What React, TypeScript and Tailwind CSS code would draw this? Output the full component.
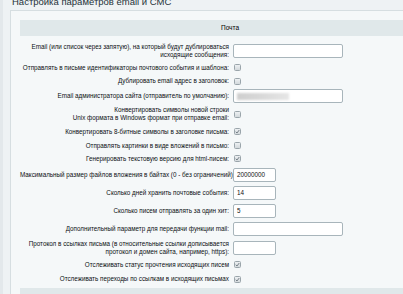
import React from "react";

type Row =
  | { kind: "input"; label: string[]; h: number; w: "wide" | "small"; value?: string; blurred?: boolean }
  | { kind: "check"; label: string[]; h: number; checked: boolean };

const rows: Row[] = [
  { kind: "input", label: ["Email (или список через запятую), на который будут дублироваться", "исходящие сообщения:"], h: 20, w: "wide" },
  { kind: "check", label: ["Отправлять в письме идентификаторы почтового события и шаблона:"], h: 13, checked: false },
  { kind: "check", label: ["Дублировать email адрес в заголовок:"], h: 14, checked: false },
  { kind: "input", label: ["Email администратора сайта (отправитель по умолчанию):"], h: 16, w: "wide", blurred: true },
  { kind: "check", label: ["Конвертировать символы новой строки", "Unix формата в Windows формат при отправке email:"], h: 20, checked: false },
  { kind: "check", label: ["Конвертировать 8-битные символы в заголовке письма:"], h: 15, checked: true },
  { kind: "check", label: ["Отправлять картинки в виде вложений в письмо:"], h: 13, checked: false },
  { kind: "check", label: ["Генерировать текстовую версию для html-писем:"], h: 13, checked: true },
  { kind: "input", label: ["Максимальный размер файлов вложения в байтах (0 - без ограничений):"], h: 19, w: "small", value: "20000000" },
  { kind: "input", label: ["Сколько дней хранить почтовые события:"], h: 18, w: "small", value: "14" },
  { kind: "input", label: ["Сколько писем отправлять за один хит:"], h: 17, w: "small", value: "5" },
  { kind: "input", label: ["Дополнительный параметр для передачи функции mail:"], h: 20, w: "wide" },
  { kind: "input", label: ["Протокол в ссылках письма (в относительные ссылки дописывается", "протокол и домен сайта, например, https):"], h: 18, w: "small" },
  { kind: "check", label: ["Отслеживать статус прочтения исходящих писем"], h: 15, checked: true },
  { kind: "check", label: ["Отслеживать переходы по ссылкам в исходящих письмах"], h: 14, checked: true },
];

function Checkbox({ checked }: { checked: boolean }) {
  return (
    <div className="ml-[1px] flex h-[7px] w-[7px] items-center justify-center rounded-[1.5px] border border-[#9aa5ab] bg-gradient-to-b from-[#edf0f2] to-[#d3d9dc]">
      {checked && (
        <svg width="5" height="5" viewBox="0 0 10 10">
          <path d="M1.5 5.5 L4 8 L8.5 2" fill="none" stroke="#56616b" strokeWidth="1.5" />
        </svg>
      )}
    </div>
  );
}

export default function App() {
  return (
    <div
      className="relative h-[294px] w-[403px] overflow-hidden bg-[#eef2f4] text-black"
      style={{ fontFamily: '"Liberation Sans", Arial, sans-serif' }}
    >
      <div className="flex h-full">
        <div className="w-[3px] shrink-0 bg-[#e3e8eb]" />
        <div className="flex w-[520px] shrink-0 flex-col pl-[7px]">
          <div className="mt-[-6px] h-[18px] pl-[2px] text-[9.5px] leading-[16px] text-[#26323a]">
            Настройка параметров email и СМС
          </div>
          <div className="flex flex-col border-l border-t border-[#d6dee1] bg-[#f5f8f9] pl-[9px] pt-[9px]">
            <div className="flex h-[16px] w-[420px] items-center justify-center bg-[#e0e8ea] text-[6.5px]">
              Почта
            </div>
            <div className="flex flex-col pt-[5px]">
              {rows.map((r, i) => (
                <div key={i} className="flex items-center" style={{ height: r.h }}>
                  <div className="w-[210px] shrink-0 pr-[1px] text-right text-[6.3px] leading-[8px] text-[#0b0f12]">
                    {r.label.map((l, j) => (
                      <div key={j} className="whitespace-nowrap">
                        {l}
                      </div>
                    ))}
                  </div>
                  <div className="ml-[3px] flex items-center">
                    {r.kind === "check" ? (
                      <Checkbox checked={r.checked} />
                    ) : (
                      <div
                        className={`flex h-[14px] items-center rounded-[2px] border border-[#a8b5bb] bg-white pl-[3px] text-[6.3px] text-[#111] ${
                          r.w === "wide" ? "w-[110px]" : "w-[43px]"
                        }`}
                      >
                        {r.value}
                        {r.blurred && <div className="h-[7px] w-[52px] bg-gradient-to-r from-[#cfcfcf] via-[#d9d9d9] to-[#e6e6e6] blur-[1px]" />}
                      </div>
                    )}
                  </div>
                </div>
              ))}
            </div>
            <div className="mt-[2px] h-[10px] w-[420px] bg-[#e0e8ea]" />
          </div>
        </div>
      </div>
    </div>
  );
}
